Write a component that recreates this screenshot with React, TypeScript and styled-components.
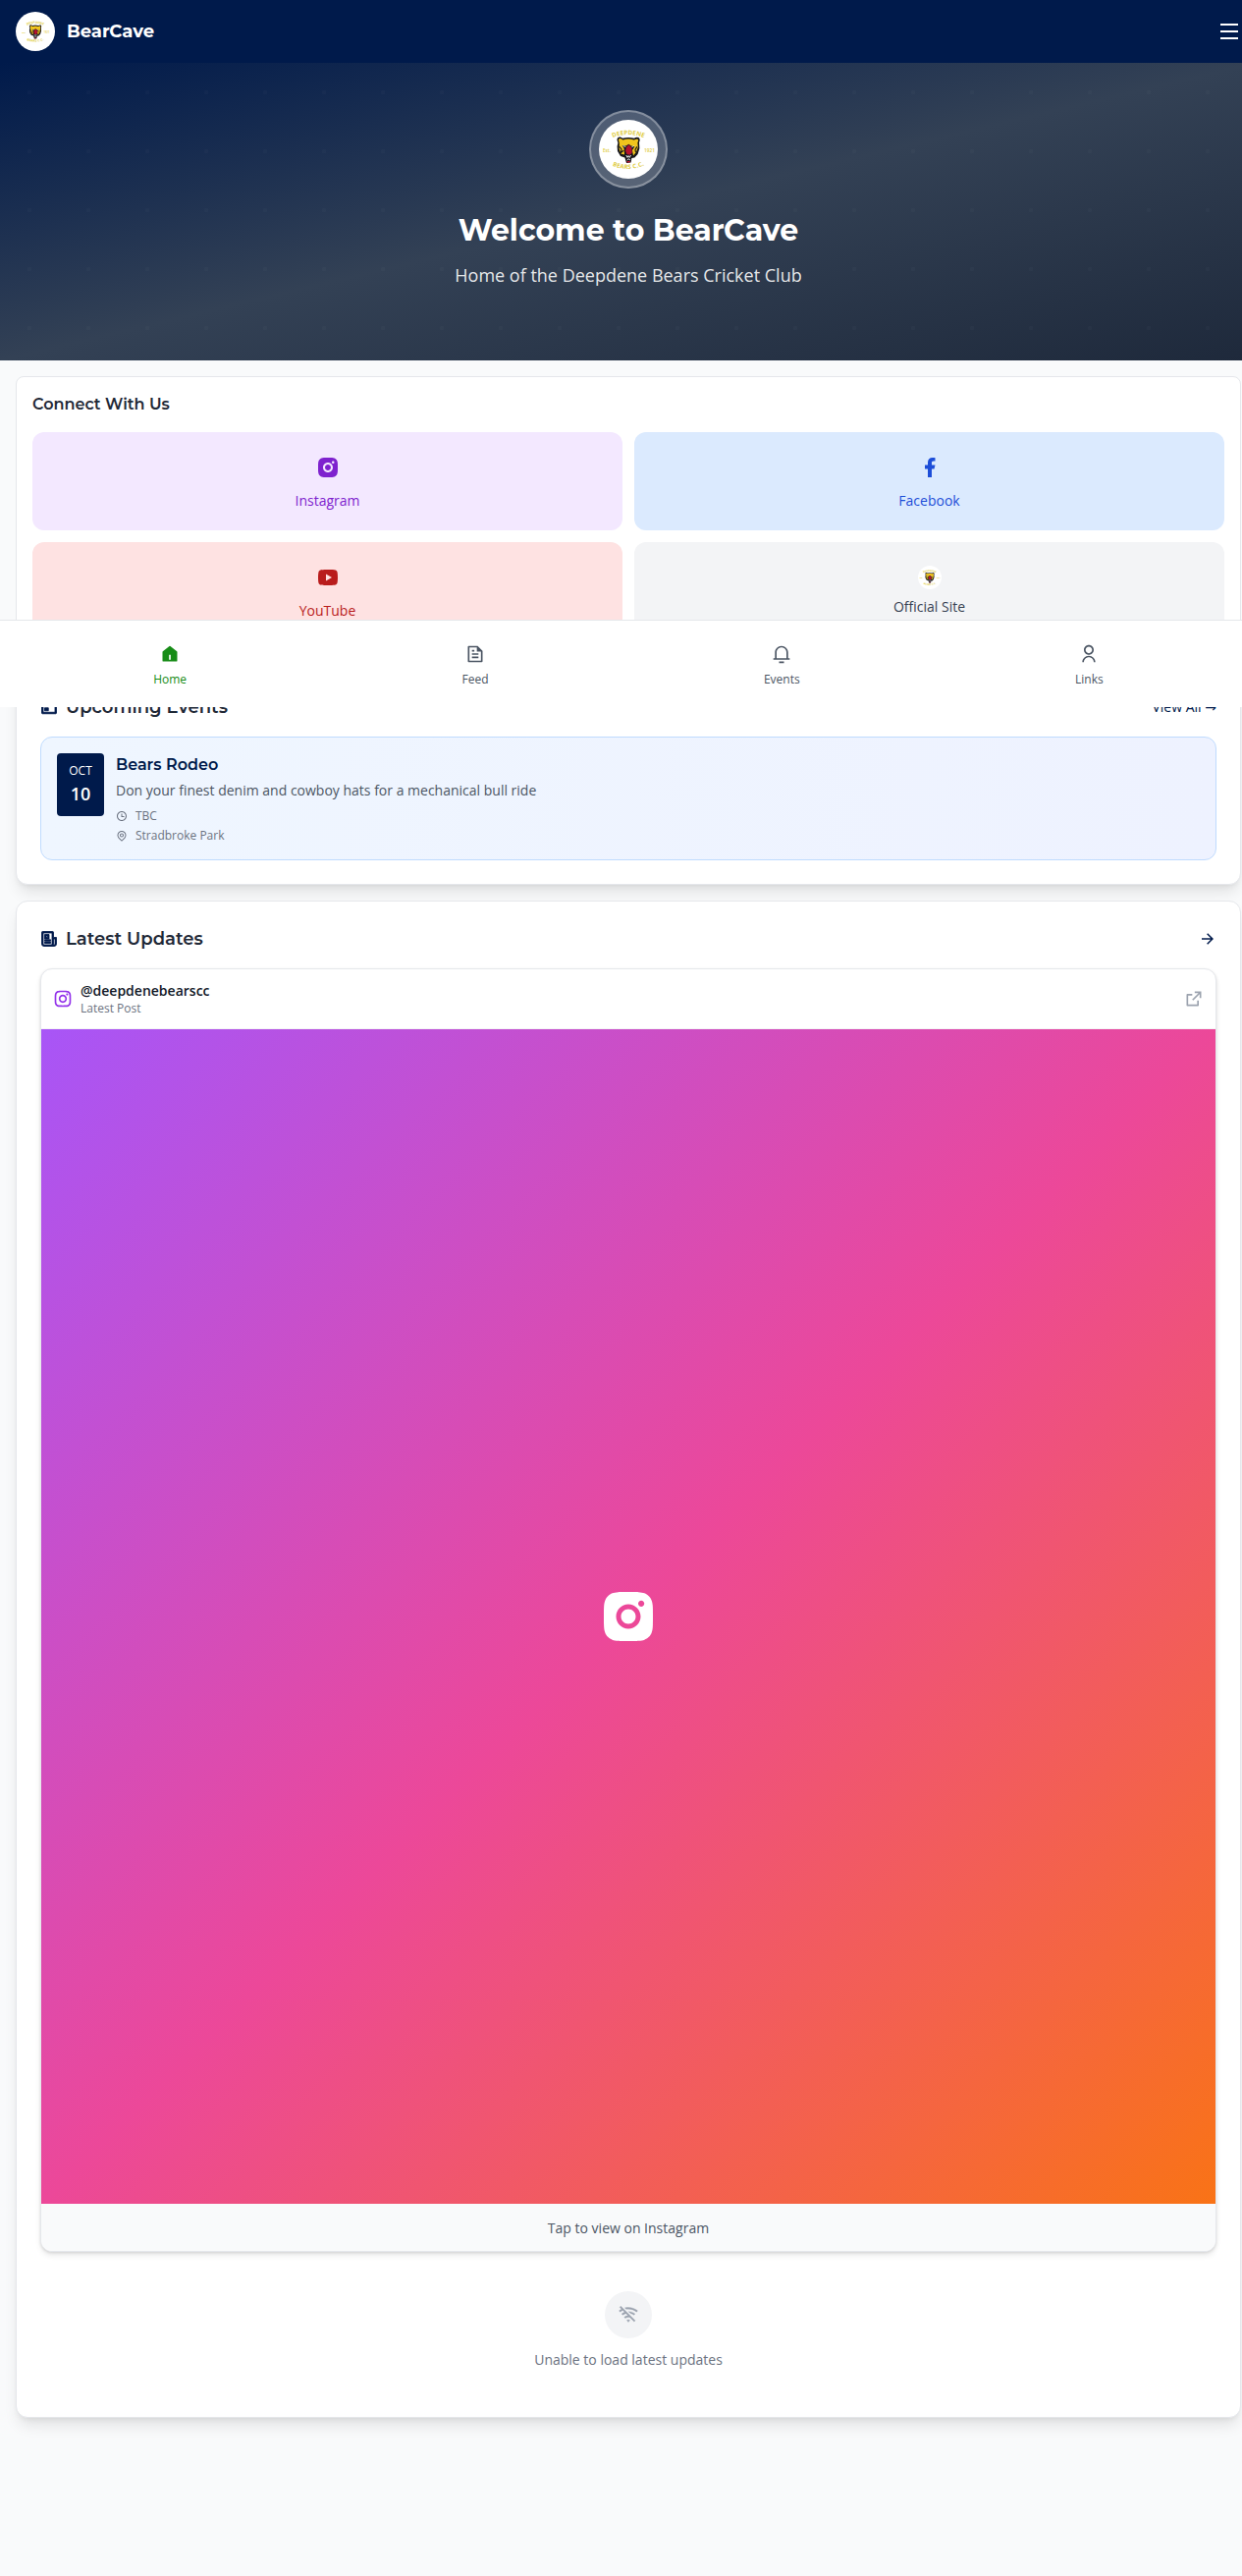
import React from "react";
import styled, { createGlobalStyle } from "styled-components";
import {
  RiMenuLine,
  RiInstagramFill,
  RiInstagramLine,
  RiFacebookFill,
  RiYoutubeFill,
  RiFileTextLine,
  RiNotification3Line,
  RiUserLine,
  RiCalendarEventLine,
  RiNewspaperLine,
  RiTimeLine,
  RiMapPinLine,
  RiArrowRightLine,
  RiExternalLinkLine,
  RiWifiOffLine,
} from "react-icons/ri";

const heading = `Montserrat, "Open Sans", sans-serif`;
const navy = "#001a4b";

const GlobalStyle = createGlobalStyle`
  *, *::before, *::after { box-sizing: border-box; }
  html { overflow: hidden; }
  body {
    margin: 0;
    background: #f9fafb;
    color: #1f2937;
    font-family: "Open Sans", "DejaVu Sans", sans-serif;
    font-size: 16px;
    line-height: 24px;
  }
  h1, h2, h3, p { margin: 0; }
  svg { display: block; flex-shrink: 0; }
`;

const Page = styled.div`
  position: relative;
  width: 1280px;
  min-height: 2623px;
`;

const Header = styled.header`
  display: flex;
  align-items: center;
  justify-content: space-between;
  height: 64px;
  padding: 0 16px;
  background: ${navy};
  color: #fff;
`;

const Brand = styled.div`
  display: flex;
  align-items: center;
  gap: 12px;
  font: 700 18px/28px ${heading};
`;

const BrandBadge = styled.span`
  display: grid;
  place-items: center;
  width: 40px;
  height: 40px;
  border-radius: 50%;
  background: #fff;
`;

const Hero = styled.section`
  display: flex;
  flex-direction: column;
  align-items: center;
  height: 303px;
  padding-top: 48px;
  color: #fff;
  background:
    radial-gradient(circle at 30px 30px, rgba(255, 255, 255, 0.018) 2px, transparent 2.5px) 0 0 / 60px 60px,
    linear-gradient(to bottom right, ${navy}, #334155, #1e293b);
`;

const HeroBadge = styled.div`
  display: grid;
  place-items: center;
  width: 80px;
  height: 80px;
  border: 2px solid rgba(255, 255, 255, 0.3);
  border-radius: 50%;
  background: rgba(255, 255, 255, 0.2);
`;

const HeroTitle = styled.h1`
  margin-top: 25px;
  font: 700 30px/36px ${heading};
`;

const HeroText = styled.p`
  margin-top: 13px;
  font-size: 18px;
  line-height: 28px;
  color: rgba(255, 255, 255, 0.9);
`;

const Main = styled.main`
  display: flex;
  flex-direction: column;
  padding: 16px;
`;

const ConnectCard = styled.section`
  padding: 16px 16px 0;
  height: 282px;
  border: 1px solid #e5e7eb;
  border-radius: 8px;
  background: #fff;
`;

const ConnectTitle = styled.h2`
  margin-bottom: 16px;
  font: 600 16px/24px ${heading};
`;

const ConnectGrid = styled.div`
  display: grid;
  grid-template-columns: 1fr 1fr;
  gap: 12px;
`;

const ConnectLink = styled.a<{ $bg: string; $fg: string; $gap: number }>`
  display: flex;
  flex-direction: column;
  align-items: center;
  gap: ${(p) => p.$gap}px;
  height: 100px;
  padding-top: 24px;
  border-radius: 12px;
  background: ${(p) => p.$bg};
  color: ${(p) => p.$fg};
  font-size: 14px;
  line-height: 20px;
`;

const Card = styled.section<{ $top: number; $h: number }>`
  margin-top: ${(p) => p.$top}px;
  height: ${(p) => p.$h}px;
  padding: 24px;
  border: 1px solid #e5e7eb;
  border-radius: 12px;
  background: #fff;
  box-shadow: 0 10px 15px -3px rgba(0, 0, 0, 0.1), 0 4px 6px -4px rgba(0, 0, 0, 0.1);
`;

const CardHead = styled.div`
  display: flex;
  align-items: center;
  justify-content: space-between;
  margin-bottom: 16px;
  color: ${navy};
`;

const CardTitle = styled.h2`
  display: flex;
  align-items: center;
  gap: 8px;
  font: 600 18px/28px ${heading};
  color: #1f2937;

  svg {
    color: ${navy};
    stroke: currentColor;
    stroke-width: 1.1;
  }
`;

const ViewAll = styled.a`
  font-size: 14px;
  font-weight: 500;
  line-height: 20px;
`;

const EventCard = styled.article`
  display: flex;
  gap: 12px;
  height: 126px;
  padding: 16px;
  border: 1px solid #bfdbfe;
  border-radius: 12px;
  background: linear-gradient(to right, #eff6ff, #eef2ff);
`;

const DateBox = styled.div`
  width: 48px;
  height: 64px;
  padding-top: 8px;
  border-radius: 4px;
  background: ${navy};
  color: #fff;
  text-align: center;
`;

const Month = styled.div`
  font-size: 12px;
  line-height: 20px;
`;

const Day = styled.div`
  font-size: 18px;
  font-weight: 600;
  line-height: 26px;
`;

const EventName = styled.h3`
  font: 600 16px/24px ${heading};
  color: ${navy};
`;

const EventText = styled.p`
  margin: 4px 0 8px;
  font-size: 14px;
  line-height: 20px;
  color: #4b5563;
`;

const EventMeta = styled.div`
  display: flex;
  align-items: center;
  gap: 8px;
  margin-bottom: 4px;
  font-size: 12px;
  line-height: 16px;
  color: #6b7280;
`;

const Post = styled.article`
  overflow: hidden;
  border: 1px solid #e5e7eb;
  border-radius: 12px;
  background: #fff;
  box-shadow: 0 1px 3px rgba(0, 0, 0, 0.1), 0 4px 6px -1px rgba(0, 0, 0, 0.1);
`;

const PostHead = styled.div`
  display: flex;
  align-items: center;
  gap: 8px;
  height: 61px;
  padding: 0 12px;
  border-bottom: 1px solid #f3f4f6;
  color: #9333ea;
`;

const PostAuthor = styled.div`
  flex: 1;
`;

const Handle = styled.div`
  font-size: 14px;
  font-weight: 600;
  line-height: 20px;
  color: #111827;
`;

const PostNote = styled.div`
  font-size: 12px;
  line-height: 16px;
  color: #6b7280;
`;

const PostMedia = styled.div`
  display: grid;
  place-items: center;
  height: 1196px;
  color: #fff;
  background: linear-gradient(to bottom right, #a855f7, #ec4899, #f97316);
`;

const PostFoot = styled.div`
  padding: 15px 14px 13px;
  background: #f9fafb;
  font-size: 14px;
  line-height: 20px;
  text-align: center;
  color: #4b5563;
`;

const Failure = styled.div`
  display: flex;
  flex-direction: column;
  align-items: center;
  gap: 12px;
  padding-top: 40px;
  font-size: 14px;
  line-height: 20px;
  color: #6b7280;
`;

const FailureIcon = styled.div`
  display: grid;
  place-items: center;
  width: 48px;
  height: 48px;
  border-radius: 50%;
  background: #f3f4f6;
  color: #9ca3af;

  svg {
    stroke: currentColor;
    stroke-width: 0.4;
  }
`;

const BottomNav = styled.nav`
  position: absolute;
  top: 631px;
  left: 0;
  display: flex;
  justify-content: space-around;
  width: 1280px;
  height: 89px;
  padding: 24px 16px 0;
  border-top: 1px solid #e5e7eb;
  background: #fff;
`;

const NavItem = styled.a<{ $active?: boolean }>`
  display: flex;
  flex-direction: column;
  align-items: center;
  gap: 8px;
  padding: 0 12px;
  font-size: 12px;
  line-height: 16px;
  color: ${(p) => (p.$active ? "#178c17" : "#4b5563")};
`;

const HomeIcon = () => (
  <svg width="20" height="20" viewBox="0 0 24 24" fill="currentColor">
    <path
      fillRule="evenodd"
      d="M21 20a1 1 0 0 1-1 1H4a1 1 0 0 1-1-1V9.49a1 1 0 0 1 .386-.79l8-6.222a1 1 0 0 1 1.228 0l8 6.222a1 1 0 0 1 .386.79V20ZM11 13v6h2v-6h-2Z"
    />
  </svg>
);

const ClubCrest = ({ size, id }: { size: number; id: string }) => (
  <svg width={size} height={size} viewBox="0 0 60 60">
    <defs>
      <path id={`${id}-top`} d="M11 19.5 Q30 10.5 49 19.5" />
      <path id={`${id}-bottom`} d="M11 45.5 Q30 54.5 49 45" />
    </defs>
    <circle cx="30" cy="30" r="30" fill="#fff" />
    <g fill="#decb3c" fontFamily="Open Sans, sans-serif" fontWeight="700" textAnchor="middle">
      <text fontSize="6.2" letterSpacing="0.1">
        <textPath href={`#${id}-top`} startOffset="50%">DEEPDENE</textPath>
      </text>
      <text fontSize="6" letterSpacing="0.2">
        <textPath href={`#${id}-bottom`} startOffset="50%">BEARS C.C.</textPath>
      </text>
      <text x="8" y="33" fontSize="4.6" fontWeight="600">Est.</text>
      <text x="51.5" y="33" fontSize="4.8" fontWeight="600">1921</text>
    </g>
    <path
      d="M18.5 20.5 Q18.5 17.3 21.8 17.5 L24.2 18.8 Q30 17 36 18.8 Q38 17 40.5 18 Q42.6 20 41 23 L41.4 29 L39.6 35 L36.4 38.5 L33.4 39 L32.6 43.6 L28 44 L26.4 38.4 L22 37 L19 32 L18.6 27 L19.4 23.4 Z"
      fill="#16161a"
    />
    <path
      d="M20 20.4 Q20.4 18.8 22.4 19.2 L24.6 20.4 Q30 18.6 35.6 20.4 L39 19.4 Q41 20.4 39.4 23 L39.8 28 L38 32.8 L35 36.4 L34 31 L36.4 27.2 L32.8 26.6 L30.4 24.8 L27.6 26.6 L23.6 26 L25.6 29 L26 35.6 L22.4 34.4 L20.6 29.6 L20.8 23.8 Z"
      fill="#f0c41c"
    />
    <path d="M20.6 27 L23 30 L22.4 33.4 L25.2 31.2 M38.8 27.4 L37 30.4 L37.4 33" stroke="#16161a" strokeWidth="1.1" fill="none" />
    <path d="M24.6 26.4 L27.4 27.6 M35.6 26.6 L33.4 27.8" stroke="#fff" strokeWidth="0.8" />
    <path d="M30.4 25.2 L33.4 28.6 L33.8 33.4 L31.6 35.8 L28.4 35 L27 31.6 L28 28 Z" fill="#b3122e" />
    <path d="M27.8 36 L29 38.4 L30.2 36.6 L31.2 38.4 L32.6 36 M28.6 41 L30.2 39.8 L32 41" stroke="#fff" strokeWidth="0.9" fill="none" />
    <path d="M28.4 42 L32 42 L31.4 43.6 L28.8 43.6 Z" fill="#b3122e" />
  </svg>
);

export default function App() {
  return (
    <>
      <GlobalStyle />
      <Page>
        <Header>
          <Brand>
            <BrandBadge>
              <ClubCrest size={32} id="brand" />
            </BrandBadge>
            BearCave
          </Brand>
          <RiMenuLine size={24} />
        </Header>

        <Hero>
          <HeroBadge>
            <ClubCrest size={60} id="hero" />
          </HeroBadge>
          <HeroTitle>Welcome to BearCave</HeroTitle>
          <HeroText>Home of the Deepdene Bears Cricket Club</HeroText>
        </Hero>

        <Main>
          <ConnectCard>
            <ConnectTitle>Connect With Us</ConnectTitle>
            <ConnectGrid>
              <ConnectLink $bg="#f3e8ff" $fg="#7e22ce" $gap={12}>
                <RiInstagramFill size={24} />
                Instagram
              </ConnectLink>
              <ConnectLink $bg="#dbeafe" $fg="#1d4ed8" $gap={12}>
                <RiFacebookFill size={24} />
                Facebook
              </ConnectLink>
              <ConnectLink $bg="#fee2e2" $fg="#b91c1c" $gap={12}>
                <RiYoutubeFill size={24} />
                YouTube
              </ConnectLink>
              <ConnectLink $bg="#f3f4f6" $fg="#374151" $gap={8}>
                <ClubCrest size={24} id="site" />
                Official Site
              </ConnectLink>
            </ConnectGrid>
          </ConnectCard>

          <Card $top={16} $h={220}>
            <CardHead>
              <CardTitle>
                <RiCalendarEventLine size={18} />
                Upcoming Events
              </CardTitle>
              <ViewAll>View All →</ViewAll>
            </CardHead>
            <EventCard>
              <DateBox>
                <Month>OCT</Month>
                <Day>10</Day>
              </DateBox>
              <div>
                <EventName>Bears Rodeo</EventName>
                <EventText>Don your finest denim and cowboy hats for a mechanical bull ride</EventText>
                <EventMeta>
                  <RiTimeLine size={12} />
                  TBC
                </EventMeta>
                <EventMeta>
                  <RiMapPinLine size={12} />
                  Stradbroke Park
                </EventMeta>
              </div>
            </EventCard>
          </Card>

          <Card $top={16} $h={1545}>
            <CardHead>
              <CardTitle>
                <RiNewspaperLine size={18} />
                Latest Updates
              </CardTitle>
              <RiArrowRightLine size={18} />
            </CardHead>
            <Post>
              <PostHead>
                <RiInstagramLine size={20} />
                <PostAuthor>
                  <Handle>@deepdenebearscc</Handle>
                  <PostNote>Latest Post</PostNote>
                </PostAuthor>
                <RiExternalLinkLine size={20} color="#9ca3af" />
              </PostHead>
              <PostMedia>
                <RiInstagramFill size={60} />
              </PostMedia>
              <PostFoot>Tap to view on Instagram</PostFoot>
            </Post>
            <Failure>
              <FailureIcon>
                <RiWifiOffLine size={20} />
              </FailureIcon>
              Unable to load latest updates
            </Failure>
          </Card>
        </Main>

        <BottomNav>
          <NavItem $active>
            <HomeIcon />
            Home
          </NavItem>
          <NavItem>
            <RiFileTextLine size={20} />
            Feed
          </NavItem>
          <NavItem>
            <RiNotification3Line size={20} />
            Events
          </NavItem>
          <NavItem>
            <RiUserLine size={20} />
            Links
          </NavItem>
        </BottomNav>
      </Page>
    </>
  );
}
